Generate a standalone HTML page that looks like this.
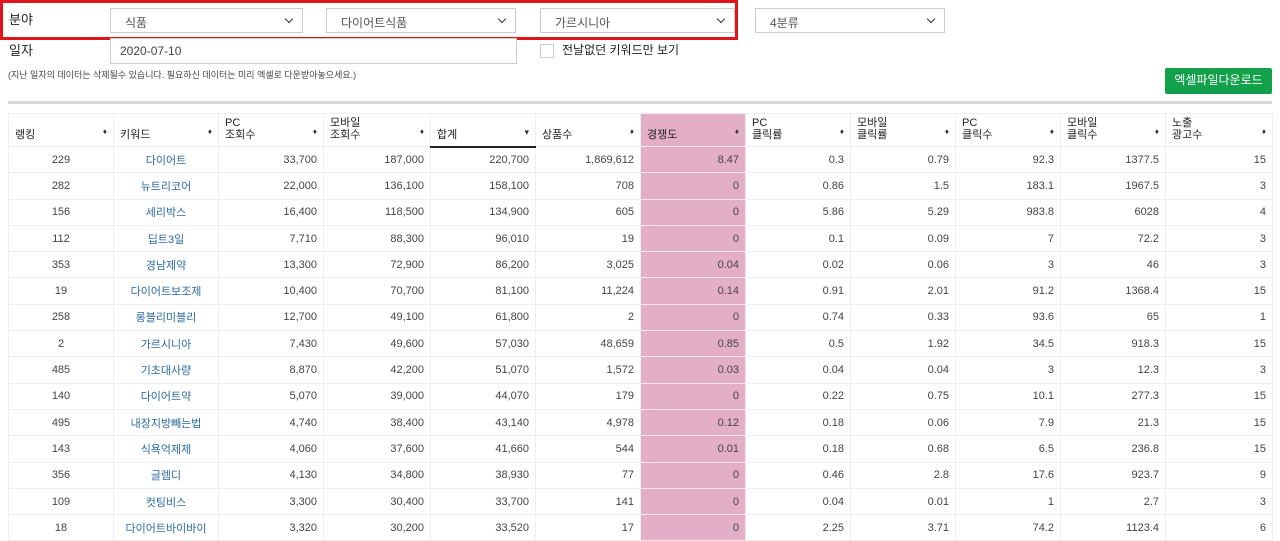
<!DOCTYPE html>
<html><head><meta charset="utf-8"><style>
*{box-sizing:border-box}
body{margin:0;width:1280px;height:541px;overflow:hidden;background:#fff;font-family:"Liberation Sans","Noto Sans CJK KR",sans-serif;color:#333;position:relative}
.abs{position:absolute}
.sel{position:absolute;height:25px;border:1px solid #ccc;background:#fff;font-size:12px;color:#555;padding:5px 0 0 14px}
.dd:after{content:"";position:absolute;right:10px;top:7px;width:5px;height:5px;border-right:1.5px solid #333;border-bottom:1.5px solid #333;transform:rotate(45deg)}
.lbl{font-size:13px;color:#222}
table{position:absolute;left:8px;top:113px;border-collapse:collapse;table-layout:fixed;width:1264px;font-size:11px}
td,th{border:1px solid #eee;padding:0 6px;overflow:hidden;white-space:nowrap}
th{height:33px;text-align:left;font-weight:normal;font-size:11px;color:#222;vertical-align:bottom;padding-bottom:5px;line-height:12px;position:relative}
th:after{content:"\2666";position:absolute;right:6px;top:12px;font-size:8px;color:#333}
th.s:after{content:"\25BE";font-size:9px}
th.s{border-bottom:2px solid #222}
td{height:26.3px;text-align:right;color:#444}
td.c{text-align:center}
td.k{text-align:center;color:#2c6aa0}
.p{background:#e3afc7;border-color:#f6e6ee}
</style></head><body>
<div class="abs" style="left:0;top:0;width:738px;height:40px;border:3px solid #e0151b"></div>
<div class="abs lbl" style="left:9px;top:9px">분야</div>
<div class="sel dd" style="left:110px;top:8px;width:193px">식품</div>
<div class="sel dd" style="left:326px;top:8px;width:190px">다이어트식품</div>
<div class="sel dd" style="left:540px;top:8px;width:195px">가르시니아</div>
<div class="sel dd" style="left:755px;top:8px;width:190px">4분류</div>
<div class="abs lbl" style="left:9px;top:40px">일자</div>
<div class="sel" style="left:110px;top:38px;width:407px;height:26px;padding-left:9px;color:#444">2020-07-10</div>
<div class="abs" style="left:540px;top:44px;width:14px;height:14px;border:1px solid #ccc"></div>
<div class="abs lbl" style="left:562px;top:41px;font-size:12px">전날없던 키워드만 보기</div>
<div class="abs" style="left:8px;top:68px;font-size:9px;color:#444">(지난 일자의 데이터는 삭제될수 있습니다. 필요하신 데이터는 미리 엑셀로 다운받아놓으세요.)</div>
<div class="abs" style="left:1165px;top:68px;width:107px;height:26px;background:#12a04b;border-radius:2px;color:#fff;font-size:12px;text-align:center;line-height:25px">엑셀파일다운로드</div>
<div class="abs" style="left:8px;top:101px;width:1264px;height:3px;background:#d8d8d8"></div>
<table>
<colgroup><col style="width:105px"><col style="width:105px"><col style="width:105px"><col style="width:107px"><col style="width:105px"><col style="width:105px"><col style="width:105px"><col style="width:105px"><col style="width:105px"><col style="width:105px"><col style="width:105px"><col style="width:107px"></colgroup>
<tr><th>랭킹</th><th>키워드</th><th>PC<br>조회수</th><th>모바일<br>조회수</th><th class="s">합계</th><th>상품수</th><th class="p">경쟁도</th><th>PC<br>클릭률</th><th>모바일<br>클릭률</th><th>PC<br>클릭수</th><th>모바일<br>클릭수</th><th>노출<br>광고수</th></tr>
<tr><td class="c">229</td><td class="k">다이어트</td><td>33,700</td><td>187,000</td><td>220,700</td><td>1,869,612</td><td class="p">8.47</td><td>0.3</td><td>0.79</td><td>92.3</td><td>1377.5</td><td>15</td></tr>
<tr><td class="c">282</td><td class="k">뉴트리코어</td><td>22,000</td><td>136,100</td><td>158,100</td><td>708</td><td class="p">0</td><td>0.86</td><td>1.5</td><td>183.1</td><td>1967.5</td><td>3</td></tr>
<tr><td class="c">156</td><td class="k">세리박스</td><td>16,400</td><td>118,500</td><td>134,900</td><td>605</td><td class="p">0</td><td>5.86</td><td>5.29</td><td>983.8</td><td>6028</td><td>4</td></tr>
<tr><td class="c">112</td><td class="k">딥트3일</td><td>7,710</td><td>88,300</td><td>96,010</td><td>19</td><td class="p">0</td><td>0.1</td><td>0.09</td><td>7</td><td>72.2</td><td>3</td></tr>
<tr><td class="c">353</td><td class="k">경남제약</td><td>13,300</td><td>72,900</td><td>86,200</td><td>3,025</td><td class="p">0.04</td><td>0.02</td><td>0.06</td><td>3</td><td>46</td><td>3</td></tr>
<tr><td class="c">19</td><td class="k">다이어트보조제</td><td>10,400</td><td>70,700</td><td>81,100</td><td>11,224</td><td class="p">0.14</td><td>0.91</td><td>2.01</td><td>91.2</td><td>1368.4</td><td>15</td></tr>
<tr><td class="c">258</td><td class="k">롱블리미블리</td><td>12,700</td><td>49,100</td><td>61,800</td><td>2</td><td class="p">0</td><td>0.74</td><td>0.33</td><td>93.6</td><td>65</td><td>1</td></tr>
<tr><td class="c">2</td><td class="k">가르시니아</td><td>7,430</td><td>49,600</td><td>57,030</td><td>48,659</td><td class="p">0.85</td><td>0.5</td><td>1.92</td><td>34.5</td><td>918.3</td><td>15</td></tr>
<tr><td class="c">485</td><td class="k">기초대사량</td><td>8,870</td><td>42,200</td><td>51,070</td><td>1,572</td><td class="p">0.03</td><td>0.04</td><td>0.04</td><td>3</td><td>12.3</td><td>3</td></tr>
<tr><td class="c">140</td><td class="k">다이어트약</td><td>5,070</td><td>39,000</td><td>44,070</td><td>179</td><td class="p">0</td><td>0.22</td><td>0.75</td><td>10.1</td><td>277.3</td><td>15</td></tr>
<tr><td class="c">495</td><td class="k">내장지방빼는법</td><td>4,740</td><td>38,400</td><td>43,140</td><td>4,978</td><td class="p">0.12</td><td>0.18</td><td>0.06</td><td>7.9</td><td>21.3</td><td>15</td></tr>
<tr><td class="c">143</td><td class="k">식욕억제제</td><td>4,060</td><td>37,600</td><td>41,660</td><td>544</td><td class="p">0.01</td><td>0.18</td><td>0.68</td><td>6.5</td><td>236.8</td><td>15</td></tr>
<tr><td class="c">356</td><td class="k">글렘디</td><td>4,130</td><td>34,800</td><td>38,930</td><td>77</td><td class="p">0</td><td>0.46</td><td>2.8</td><td>17.6</td><td>923.7</td><td>9</td></tr>
<tr><td class="c">109</td><td class="k">컷팅비스</td><td>3,300</td><td>30,400</td><td>33,700</td><td>141</td><td class="p">0</td><td>0.04</td><td>0.01</td><td>1</td><td>2.7</td><td>3</td></tr>
<tr><td class="c">18</td><td class="k">다이어트바이바이</td><td>3,320</td><td>30,200</td><td>33,520</td><td>17</td><td class="p">0</td><td>2.25</td><td>3.71</td><td>74.2</td><td>1123.4</td><td>6</td></tr>
</table>
</body></html>
